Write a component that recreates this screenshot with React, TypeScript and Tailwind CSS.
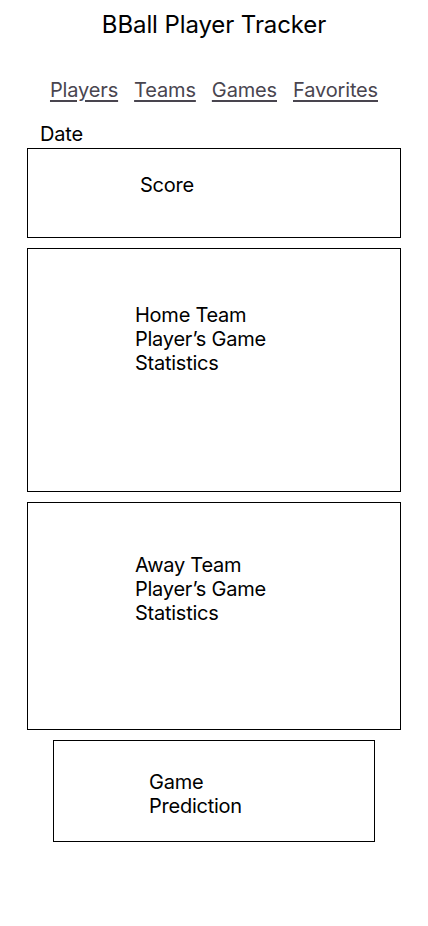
export default function App() {
  const links = ["Players", "Teams", "Games", "Favorites"];
  return (
    <div className="w-[428px] h-[926px] bg-white text-black font-['Inter',sans-serif]">
      <h1 className="pt-[9px] text-center text-[24px] leading-[32px] tracking-[-0.1px]">BBall Player Tracker</h1>
      <nav className="mt-[35px] flex justify-center gap-4 text-[20px] leading-[28px] tracking-[-0.15px] text-[#49454f]">
        {links.map((l) => (
          <a key={l} href="#" className="underline underline-offset-[3px]">
            {l}
          </a>
        ))}
      </nav>
      <p className="mt-[16px] pl-[40px] text-[20px] leading-[28px] tracking-[-0.2px]">Date</p>
      <div className="mx-[27px] flex flex-col gap-[10px] text-[20px] leading-[24px] tracking-[-0.25px]">
        <div className="h-[90px] border border-black pl-[112px] pt-[24px]">Score</div>
        <div className="h-[244px] border border-black pl-[107px] pt-[54px]">
          Home Team
          <br />
          Player’s Game
          <br />
          Statistics
        </div>
        <div className="h-[228px] border border-black pl-[107px] pt-[50px]">
          Away Team
          <br />
          Player’s Game
          <br />
          Statistics
        </div>
        <div className="mx-[26px] h-[102px] border border-black pl-[95px] pt-[29px]">
          Game
          <br />
          Prediction
        </div>
      </div>
    </div>
  );
}
